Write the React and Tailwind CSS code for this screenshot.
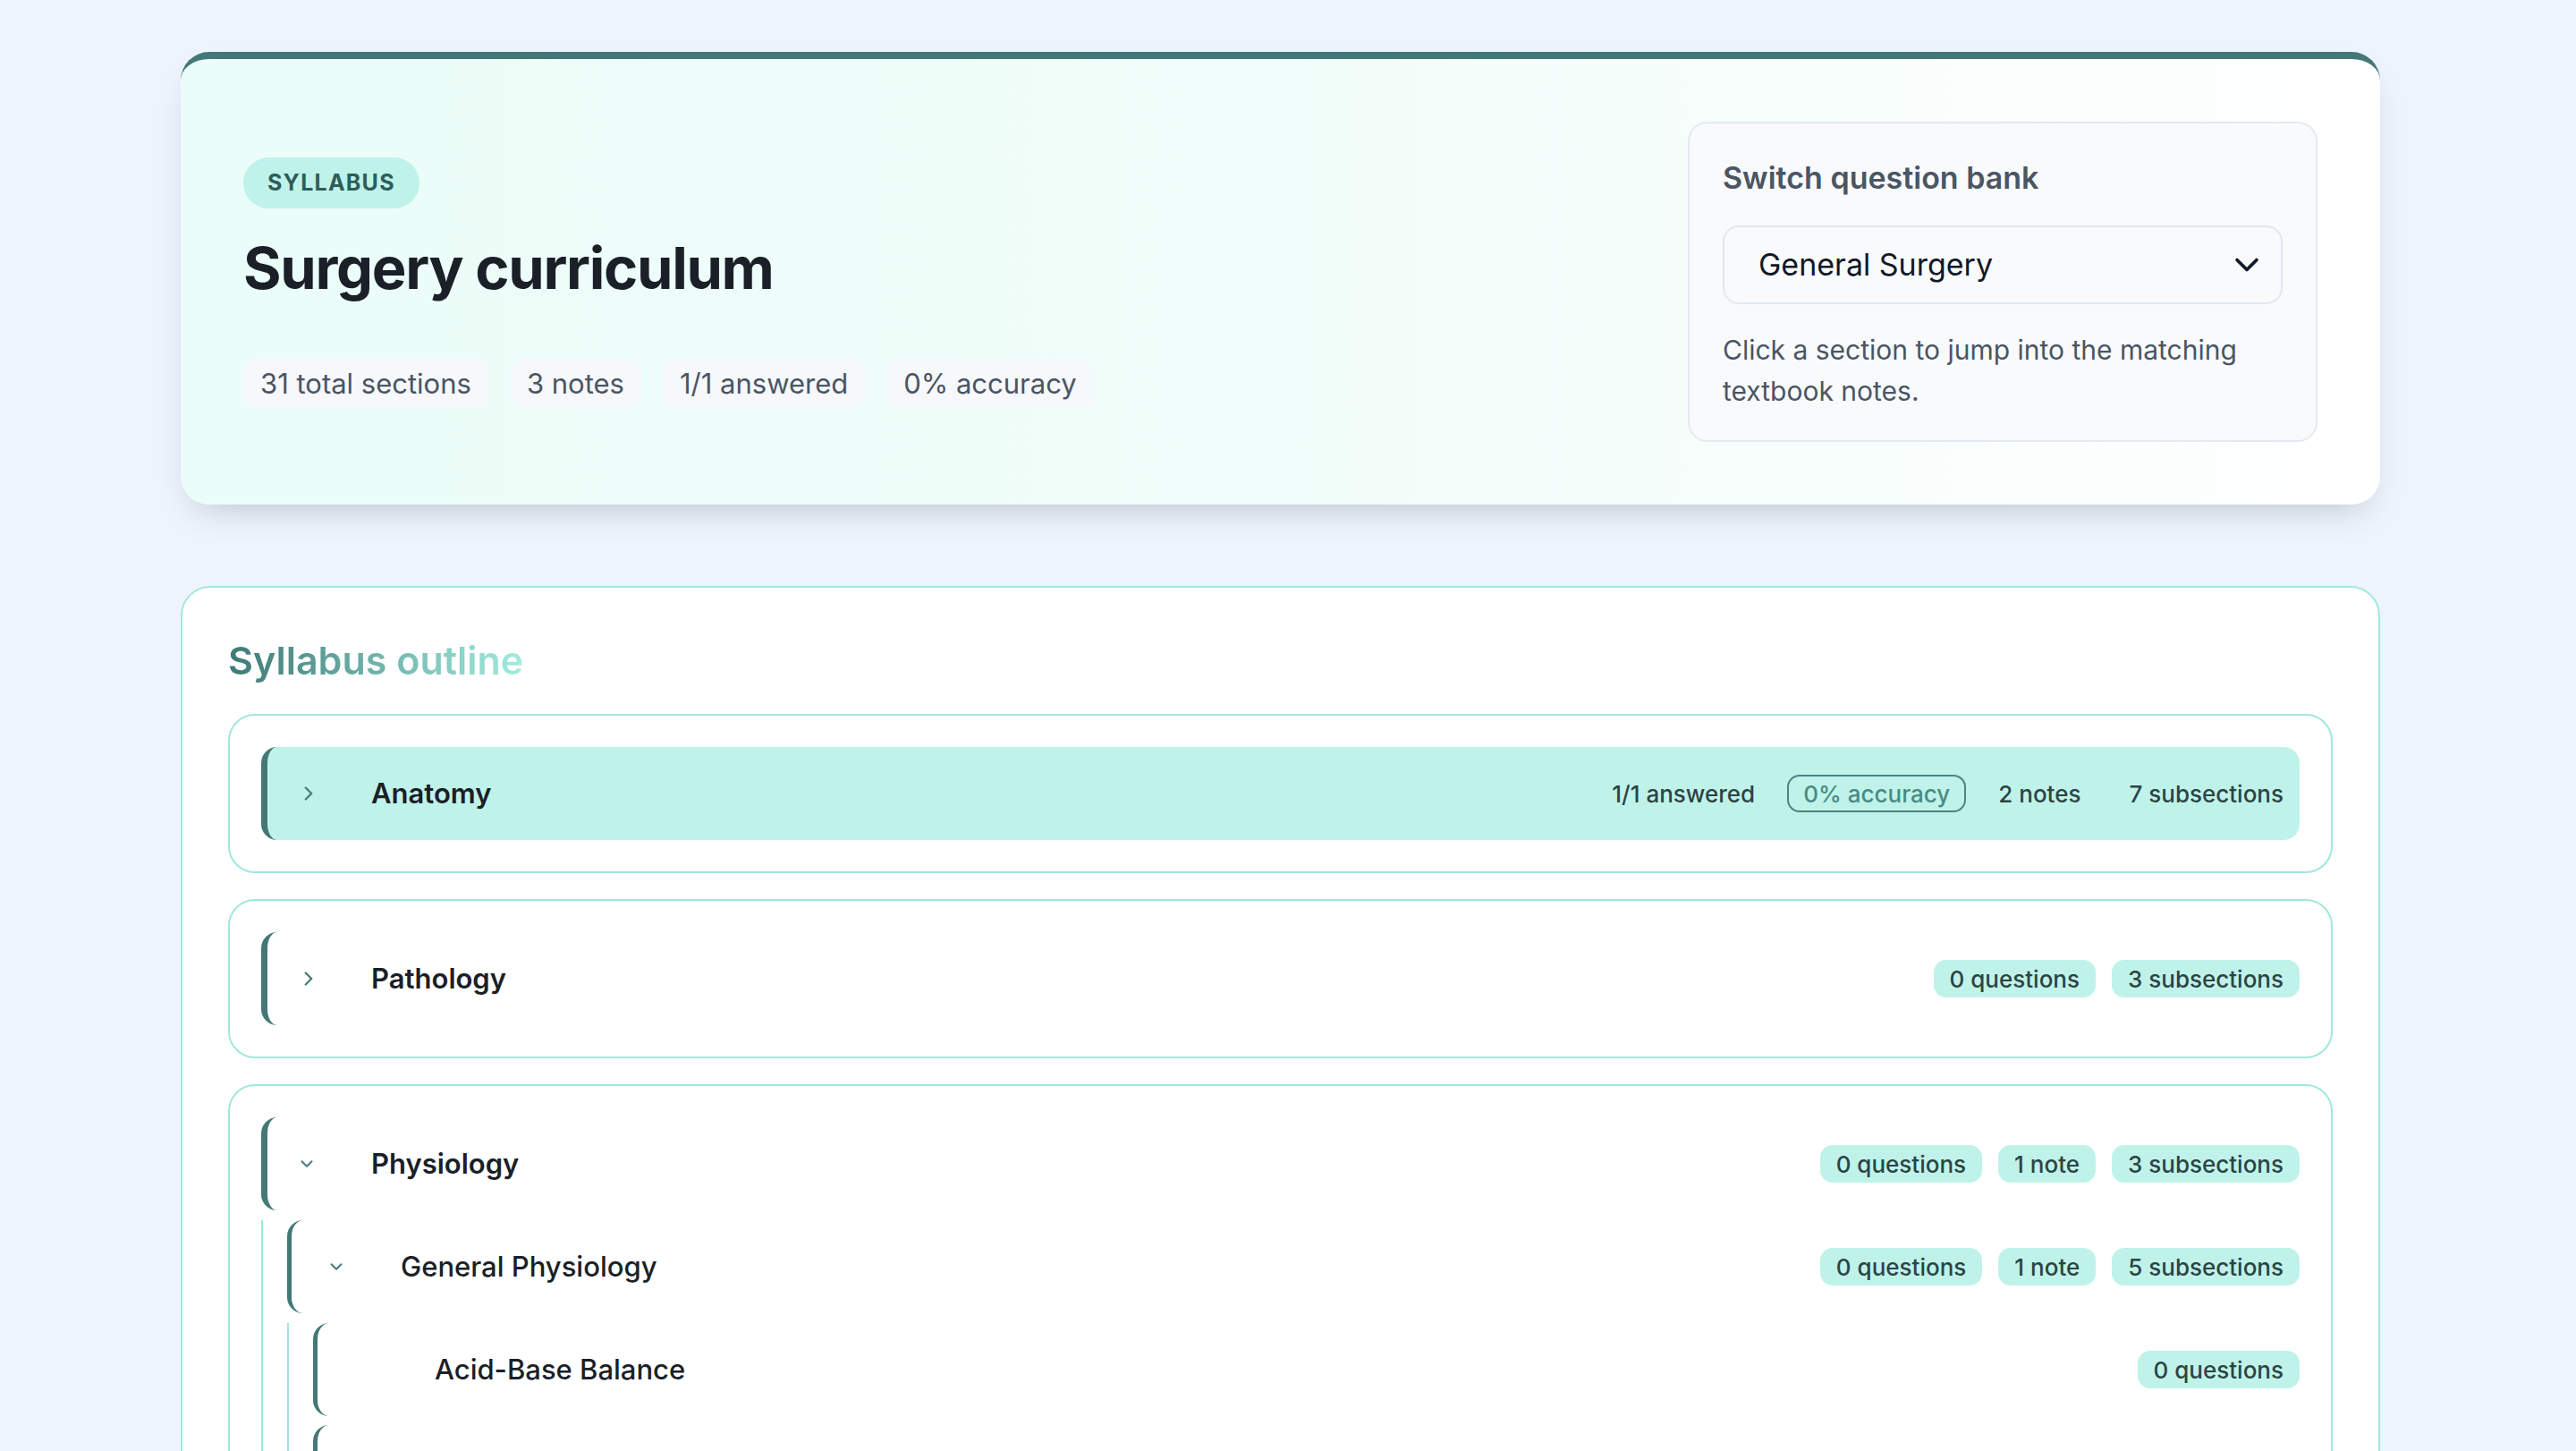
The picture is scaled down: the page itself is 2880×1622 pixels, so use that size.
import { ChevronDown, ChevronRight } from 'lucide-react';

const STATS = ['31 total sections', '3 notes', '1/1 answered', '0% accuracy'];

// tree of the outline, only what fits on screen matters
const OUTLINE = [
  {
    id: 'anatomy',
    title: 'Anatomy',
    active: true,
    open: false,
    chips: [
      { label: '1/1 answered' },
      { label: '0% accuracy', outlined: true },
      { label: '2 notes' },
      { label: '7 subsections' },
    ],
  },
  {
    id: 'pathology',
    title: 'Pathology',
    open: false,
    chips: [{ label: '0 questions' }, { label: '3 subsections' }],
  },
  {
    id: 'physiology',
    title: 'Physiology',
    open: true,
    chips: [{ label: '0 questions' }, { label: '1 note' }, { label: '3 subsections' }],
    children: [
      {
        id: 'general-physiology',
        title: 'General Physiology',
        open: true,
        chips: [{ label: '0 questions' }, { label: '1 note' }, { label: '5 subsections' }],
        children: [
          { id: 'acid-base', title: 'Acid-Base Balance', chips: [{ label: '0 questions' }] },
          { id: 'fluids', title: 'Body Fluids and Electrolytes', chips: [{ label: '0 questions' }] },
          { id: 'thermo', title: 'Thermoregulation', chips: [{ label: '0 questions' }] },
        ],
      },
    ],
  },
];

function Chip({ label, outlined, plain }) {
  if (outlined) {
    return (
      <span className="flex h-[42px] items-center rounded-[14px] border-2 border-[#4a8481] px-[16px] text-[26px] font-medium text-[#4a8a85]">
        {label}
      </span>
    );
  }
  return (
    <span
      className={
        plain
          ? 'flex h-[42px] items-center rounded-[14px] px-[18px] text-[26px] font-medium text-[#2c4444]'
          : 'flex h-[42px] items-center rounded-[14px] bg-[#bff3ea] px-[18px] text-[26px] font-medium text-[#2c4444]'
      }
    >
      {label}
    </span>
  );
}

function Row({ node, depth }) {
  const hasKids = !!node.children;
  const border = depth === 0 ? 'border-l-[7px]' : 'border-l-[5px]';
  const bg = node.active ? 'bg-[#bff3ea]' : '';
  const labelCls =
    depth === 0
      ? 'text-[31px] font-semibold text-[#1b1f27]'
      : 'text-[31px] font-medium text-[#1b1f27]';
  const pad = depth === 0 ? 'pl-[33px]' : depth === 1 ? 'pl-[39px]' : 'pl-[40px]';
  const gutter = depth === 0 ? 'w-[83px]' : depth === 1 ? 'w-[83px]' : 'w-[91px]';

  return (
    <div className={`flex h-[104px] items-center rounded-[18px] ${border} border-[#447878] ${bg} ${pad}`}>
      <div className={`flex ${gutter} shrink-0 items-center`}>
        {hasKids && node.open && <ChevronDown size={22} strokeWidth={2.2} className="text-[#4a7c7c]" />}
        {hasKids && !node.open && <ChevronRight size={26} strokeWidth={2.2} className="text-[#4a7c7c]" />}
        {!hasKids && node.chips.length > 1 && <ChevronRight size={26} strokeWidth={2.2} className="text-[#4a7c7c]" />}
      </div>
      <span className={labelCls}>{node.title}</span>
      <div className="ml-auto flex items-center gap-[18px]">
        {node.chips.map((c) => (
          <Chip key={c.label} {...c} plain={node.active && !c.outlined} />
        ))}
      </div>
    </div>
  );
}

function Node({ node, depth }) {
  return (
    <div className="flex flex-col">
      <Row node={node} depth={depth} />
      {node.open && node.children && (
        <div className="mt-[11px] flex flex-col gap-[10px] border-l-2 border-[#a0e8dc] pl-[27px]">
          {node.children.map((child) => (
            <Node key={child.id} node={child} depth={depth + 1} />
          ))}
        </div>
      )}
    </div>
  );
}

export default function App() {
  return (
    <div className="min-h-screen bg-[#eef4fd] pl-[202px] pr-[219px] pt-[58px] pb-[80px] font-['Inter',_sans-serif]">
      {/* header card */}
      <div className="flex items-center justify-between rounded-[32px] border-t-[8px] border-[#447878] bg-linear-to-r from-[#eafdf8] via-[#f1fdfa] to-white px-[70px] py-[70px] shadow-[0_18px_40px_-18px_rgba(30,41,59,0.28)]">
        <div className="flex flex-col pt-[3px]">
          <span className="flex h-[57px] w-fit items-center rounded-full bg-[#bff3ea] px-[27px] text-[25px] font-bold tracking-[0.05em] text-[#2f5c5a]">
            SYLLABUS
          </span>
          <h1 className="mt-[28px] text-[65px] font-bold leading-[1.2] tracking-[-0.02em] text-[#1b1f27]">
            Surgery curriculum
          </h1>
          <div className="mt-[62px] flex gap-[24px]">
            {STATS.map((s) => (
              <span
                key={s}
                className="flex h-[55px] items-center rounded-[16px] bg-[#f6f8fb] px-[19px] text-[31px] text-[#4b5563]"
              >
                {s}
              </span>
            ))}
          </div>
        </div>

        <div className="w-[704px] rounded-[22px] border-2 border-[#e5e9f0] bg-[#f8fafc] px-[37px] pt-[41px] pb-[32px]">
          <p className="text-[34px] font-semibold leading-[1.2] text-[#4b5563]">Switch question bank</p>
          <button className="mt-[32px] flex h-[88px] w-full items-center justify-between rounded-[18px] border-2 border-[#e2e8f0] bg-[#f8fafc] pl-[38px] pr-[16px] text-[34px] text-[#111827]">
            General Surgery
            <ChevronDown size={44} strokeWidth={2} className="text-[#111827]" />
          </button>
          <p className="mt-[28px] text-[30px] leading-[46px] text-[#4b5563]">
            Click a section to jump into the matching textbook notes.
          </p>
        </div>
      </div>

      {/* outline card */}
      <div className="mt-[91px] rounded-[33px] border-2 border-[#a0e8dc] bg-white px-[51px] pt-[56px] pb-[60px]">
        <h2 className="inline-block bg-linear-to-r from-[#3f7a76] via-[#6fb3aa] to-[#a3ecdf] bg-clip-text text-[43px] font-semibold leading-[1.2] text-transparent">
          Syllabus outline
        </h2>
        <div className="mt-[34px] flex flex-col gap-[29px]">
          {OUTLINE.map((node) => (
            <div key={node.id} className="rounded-[30px] border-2 border-[#a0e8dc] p-[35px]">
              <Node node={node} depth={0} />
            </div>
          ))}
        </div>
      </div>
    </div>
  );
}
